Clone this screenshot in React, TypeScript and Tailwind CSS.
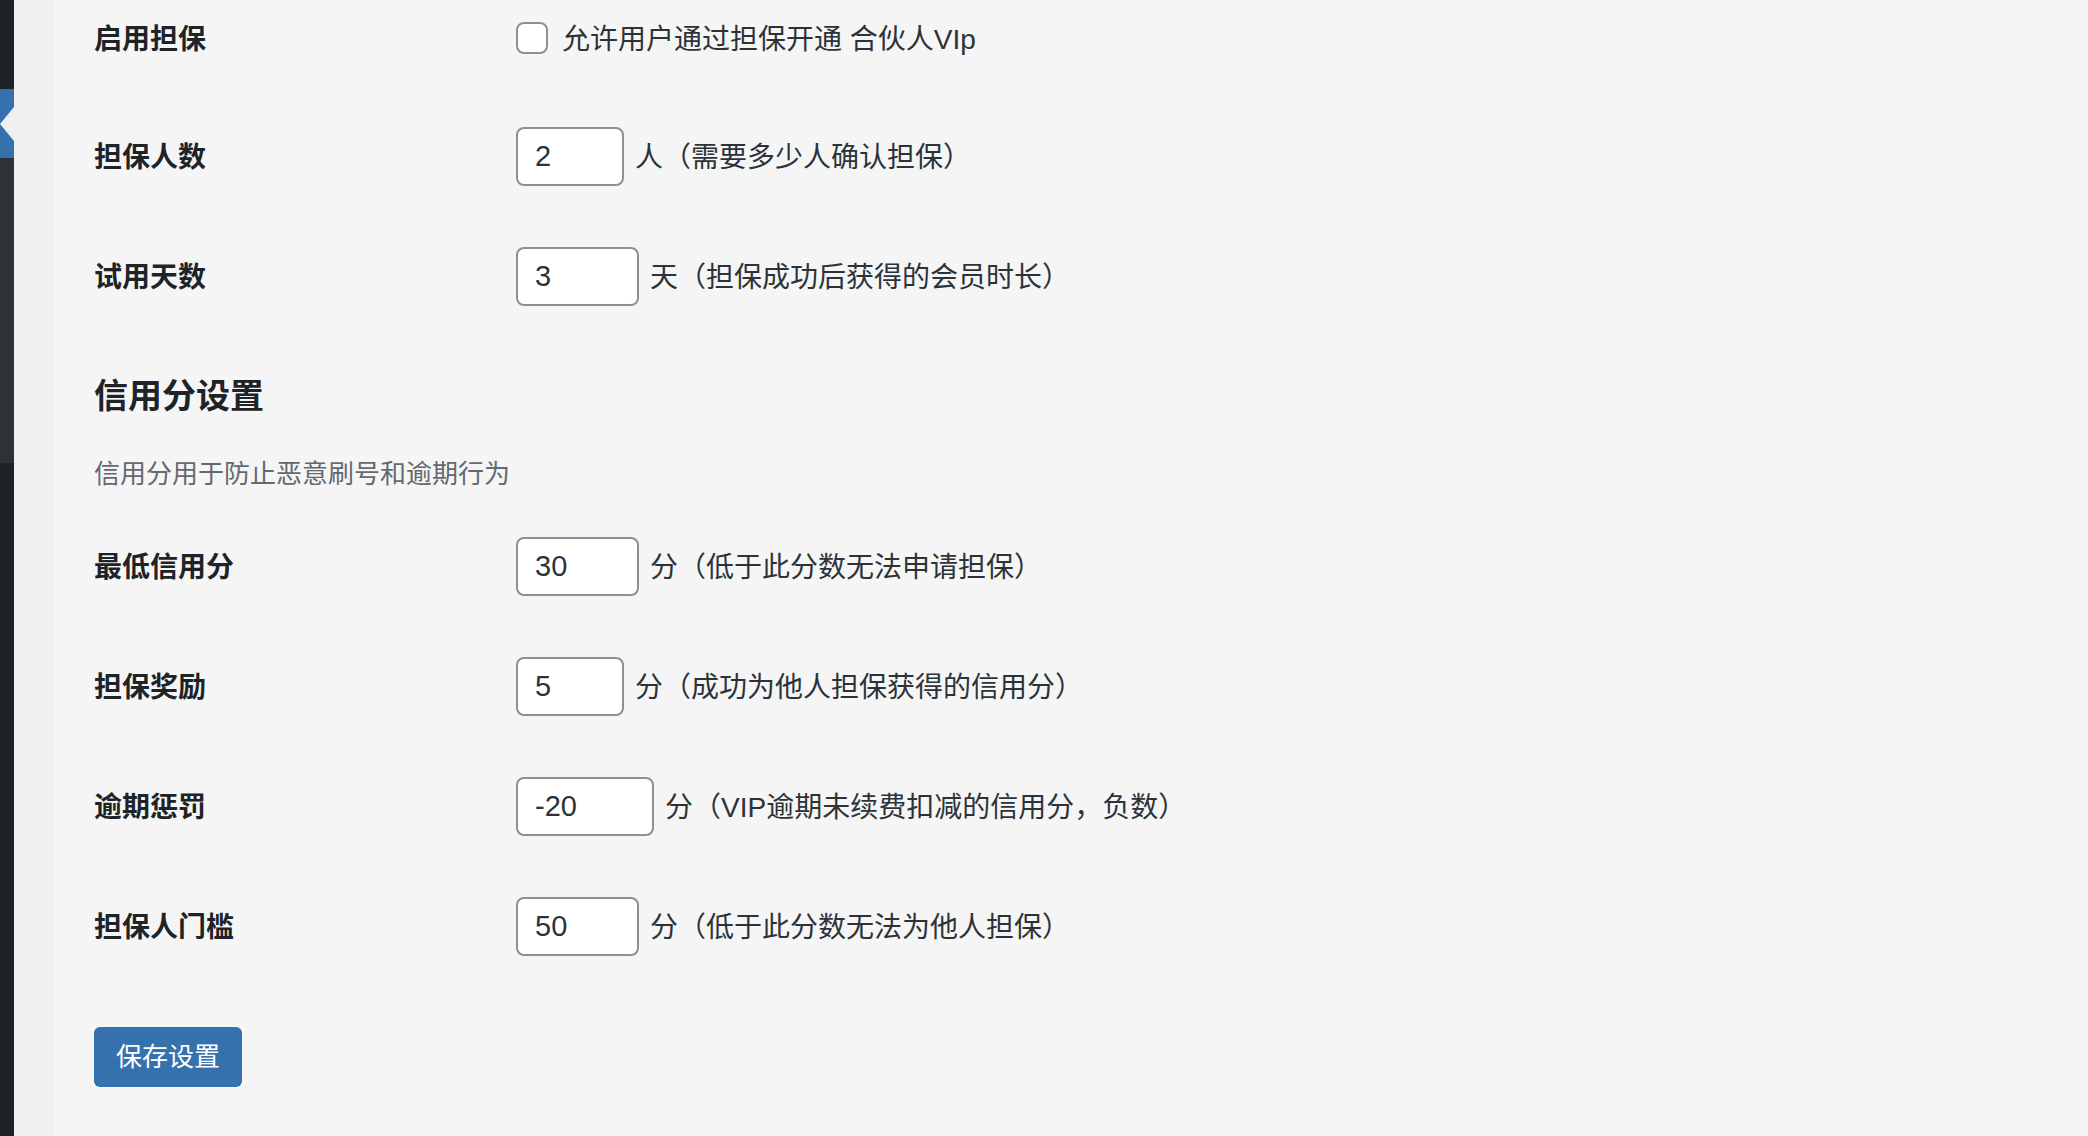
import React from 'react';

const font = { fontFamily: '"Liberation Sans", "Noto Sans CJK SC", sans-serif' };

const Field = ({ label, value, width, suffix }: { label: string; value: string; width: string; suffix: string }) => (
  <div className="flex h-[120px] items-center">
    <div className="w-[422px] shrink-0 pt-[3px] text-[28px] font-semibold text-[#1d2327]">{label}</div>
    <input
      type="text"
      defaultValue={value}
      className={`${width} h-[59px] rounded-[8px] border-2 border-[#8c8f94] bg-white px-[17px] text-[29px] text-[#2c3338] outline-none`}
      style={font}
    />
    <span className="ml-[11px] pt-[3px] text-[28px] text-[#2c3338]">{suffix}</span>
  </div>
);

export default function App() {
  return (
    <div className="flex h-[1136px] w-full overflow-hidden bg-[#f5f5f5]" style={font}>
      {/* admin menu edge */}
      <div className="flex w-[14px] shrink-0 flex-col">
        <div className="h-[89px] bg-[#1d2327]" />
        <div className="relative h-[69px] bg-[#3571ad]">
          <svg className="absolute right-0 top-[18px]" width="14" height="34" viewBox="0 0 14 34">
            <polygon points="14,0 0,17 14,34" fill="#f0f0f1" />
          </svg>
        </div>
        <div className="h-[305px] bg-[#2c3338]" />
        <div className="flex-1 bg-[#1d2327]" />
      </div>
      <div className="w-[40px] shrink-0 bg-[#f0f0f1]" />

      <div className="flex-1 pl-[40px]">
        {/* 担保设置 */}
        <div className="flex h-[96px] items-start pt-[21px]">
          <div className="flex h-[34px] w-[422px] shrink-0 items-center pt-[3px] text-[28px] font-semibold text-[#1d2327]">启用担保</div>
          <div className="flex h-[34px] items-center">
            <input
              type="checkbox"
              className="h-[32px] w-[32px] appearance-none rounded-[8px] border-2 border-[#8c8f94] bg-white"
            />
            <span className="ml-[14px] pt-[3px] text-[28px] text-[#2c3338]">允许用户通过担保开通 合伙人VIp</span>
          </div>
        </div>
        <Field label="担保人数" value="2" width="w-[108px]" suffix="人（需要多少人确认担保）" />
        <Field label="试用天数" value="3" width="w-[123px]" suffix="天（担保成功后获得的会员时长）" />

        {/* 信用分设置 */}
        <h2 className="mt-[38px] text-[34px] font-semibold leading-[44px] text-[#1d2327]">信用分设置</h2>
        <p className="mt-[36px] text-[26px] leading-[40px] text-[#646970]">信用分用于防止恶意刷号和逾期行为</p>

        <div className="mt-[12px]">
          <Field label="最低信用分" value="30" width="w-[123px]" suffix="分（低于此分数无法申请担保）" />
          <Field label="担保奖励" value="5" width="w-[108px]" suffix="分（成功为他人担保获得的信用分）" />
          <Field label="逾期惩罚" value="-20" width="w-[138px]" suffix="分（VIP逾期未续费扣减的信用分，负数）" />
          <Field label="担保人门槛" value="50" width="w-[123px]" suffix="分（低于此分数无法为他人担保）" />
        </div>

        <button className="mt-[41px] h-[60px] w-[148px] rounded-[6px] bg-[#3571ad] text-[26px] text-white">
          保存设置
        </button>
      </div>
    </div>
  );
}
